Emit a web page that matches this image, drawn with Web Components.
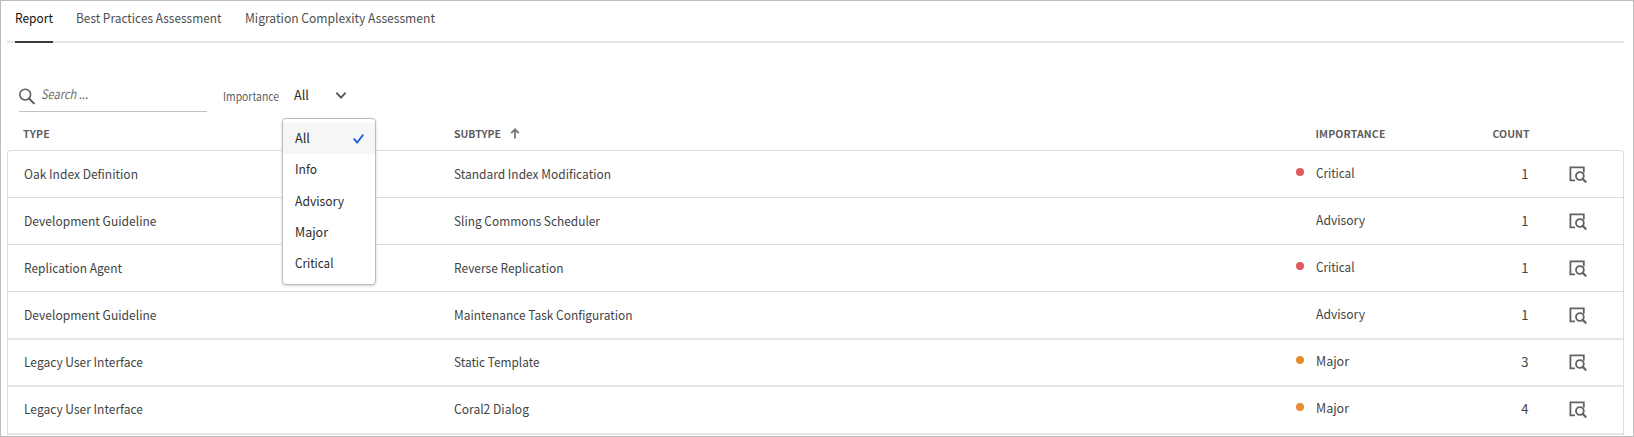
<!DOCTYPE html>
<html lang="en">
<head>
<meta charset="utf-8">
<title>Report</title>
<style>
  html, body { margin: 0; height: 100%; overflow: hidden; background: #fff; }
  body { font: 13px/18px "Noto Sans CJK SC", "Noto Sans", sans-serif; color: #444; }
</style>
</head>
<body>
<report-page></report-page>
<script>
const define = (name, html, init) => {
  const tpl = document.createElement('template');
  tpl.innerHTML = html;
  customElements.define(name, class extends HTMLElement {
    constructor() {
      super();
      this.attachShadow({ mode: 'open' }).append(tpl.content.cloneNode(true));
    }
    connectedCallback() { if (init) init(this, this.shadowRoot); }
  });
};

/* A single line of text that fills the given width: condensed when too long, tracked when too short. */
define('fit-text', `<style>
  :host { display: inline-block; white-space: nowrap; }
  span { display: inline-block; transform-origin: 0 50%; }
</style><span><slot></slot></span>`, (el, root) => {
  const want = parseFloat(el.getAttribute('width'));
  const span = root.querySelector('span');
  const n = el.textContent.length;
  if (!want || n < 2) return;
  const natural = span.getBoundingClientRect().width;
  el.style.width = want + 'px';
  if (natural > want) span.style.transform = `scaleX(${(want / natural).toFixed(4)})`;
  else span.style.letterSpacing = ((want - natural) / n).toFixed(3) + 'px';
});

define('tab-item', `<style>
  :host { display: block; box-sizing: border-box; height: 43px; padding-top: 9px; color: #505050; }
  :host([selected]) { color: #111; border-bottom: 2px solid #3c3c3c; }
</style><slot></slot>`);

define('tab-bar', `<style>
  :host { display: flex; gap: 23.2px; height: 43px; margin: 0 10px 0 7px; padding-left: 8px;
    box-sizing: border-box; background: linear-gradient(#e4e4e4, #e4e4e4) 0 41px / 100% 2px no-repeat; }
</style><slot></slot>`);

define('search-field', `<style>
  :host { display: flex; width: 188px; height: 29px; border-bottom: 1px solid #c2c2c2; box-sizing: border-box; color: #6e6e6e; font-style: italic; }
  svg { margin: 5px 6px 0 0; flex: none; }
  span { padding-top: 2px; }
</style>
<svg width="16" height="17" viewBox="0 0 16 17" fill="none" stroke="#5c5c5c"><circle cx="6.2" cy="6.6" r="5.4" stroke-width="1.6"/><path d="M10 10.5l4.9 4.9" stroke-width="2" stroke-linecap="round"/></svg>
<span><slot></slot></span>`);

define('menu-item', `<style>
  :host { display: flex; height: 31.3px; box-sizing: border-box; padding: 6px 11px 0 12px; color: #2c2c2c; justify-content: space-between; }
  :host([selected]) { background: #f6f6f6; }
  svg { display: none; margin-top: 5px; }
  :host([selected]) svg { display: block; }
</style><slot></slot>
<svg width="11" height="10" viewBox="0 0 11 10"><path d="M1.2 5.2l3 3.3L9.7 1.3" fill="none" stroke="#1566dc" stroke-width="1.9" stroke-linecap="round" stroke-linejoin="round"/></svg>`);

define('select-menu', `<style>
  :host { display: block; position: absolute; left: 281px; top: 117px; width: 94px; height: 167px; box-sizing: border-box;
    padding: 4px 0; background: #fff; border: 1px solid #bdbdbd; border-radius: 4px; box-shadow: 0 1px 3px rgba(0,0,0,.18); z-index: 2; }
</style><slot></slot>`);

define('select-field', `<style>
  :host { display: flex; color: #2c2c2c; }
  .label { font-size: 11.5px; color: #5f5f5f; margin: 4px 15px 0 0; }
  .value { margin: 3px 27px 0 0; }
  svg { margin-top: 9px; }
</style>
<span class="label"><slot name="label"></slot></span>
<span class="value"><slot></slot></span>
<svg width="10" height="8" viewBox="0 0 10 8"><path d="M1 1.3l4 4.4 4-4.4" fill="none" stroke="#555" stroke-width="1.9" stroke-linecap="round" stroke-linejoin="round"/></svg>`);

define('table-header', `<style>
  :host { display: grid; grid-template-columns: 430.5px 862px 130px 84px; height: 24px; margin: 14px 0 0 23px;
    font-size: 10.5px; line-height: 15px; font-weight: 700; color: #5e5e5e; }
  .sort { display: flex; gap: 9.5px; }
  .count { text-align: right; }
  svg { margin-top: 2px; }
</style>
<fit-text width="27">TYPE</fit-text>
<div class="sort"><fit-text width="47">SUBTYPE</fit-text><svg width="10" height="11" viewBox="0 0 10 11"><path d="M5 10.5V2M1.2 5.2L5 1.3l3.8 3.9" fill="none" stroke="#777" stroke-width="1.8"/></svg></div>
<fit-text width="70">IMPORTANCE</fit-text>
<div class="count"><fit-text width="37">COUNT</fit-text></div>`);

define('table-row', `<style>
  :host { display: grid; grid-template-columns: 430px 837px 24.5px 129px 84px 1fr; height: 47.1px; box-sizing: border-box; padding: 14px 0 0 16px;
    border-top: 1px solid #dcdcdc; }
  :host(:first-of-type) { margin-top: -1px; border-top-color: transparent; }
  :host(:nth-of-type(n+5)) { border-top: 2px solid #e6e6e6; padding-top: 13px; }
  .dot { width: 8px; height: 8px; border-radius: 50%; margin: 3px 0 0 5px; }
  .Critical { background: #e05a60; } .Major { background: #e68d31; }
  .level { margin-top: -1px; }
  .count { text-align: right; }
  svg { margin: 1px 0 0 40px; }
</style>
<div><slot name="type"></slot></div><div><slot name="subtype"></slot></div>
<i class="dot"></i><div class="level"><slot name="level"></slot></div><div class="count"><slot name="count"></slot></div>
<svg width="18" height="18" viewBox="0 0 18 18" fill="none" stroke="#626262" stroke-width="1.8"><path d="M6 14.4H1.4V1.4h13.4v5"/><circle cx="10.9" cy="10" r="3.9"/><path d="M13.7 12.9l2.9 2.9" stroke-width="2.2" stroke-linecap="round"/></svg>`,
(el, root) => root.querySelector('.dot').classList.add(el.getAttribute('level')));

define('data-table', `<style>
  :host { display: block; margin: 0 10px 0 7px; height: 285px; box-sizing: border-box; border: 1px solid #dcdcdc; border-bottom: 0; border-radius: 4px 4px 0 0; overflow: hidden; }
  .end { height: 2px; background: #e6e6e6; }
</style><slot></slot><div class="end"></div>`, (el) => {
  const text = (slot, value, width) => `<fit-text slot="${slot}" width="${width}">${value}</fit-text>`;
  const rows = [
    ['Oak Index Definition', 114, 'Standard Index Modification', 157, 'Critical', 1],
    ['Development Guideline', 132.5, 'Sling Commons Scheduler', 146, 'Advisory', 1],
    ['Replication Agent', 98, 'Reverse Replication', 109.5, 'Critical', 1],
    ['Development Guideline', 132.5, 'Maintenance Task Configuration', 178.5, 'Advisory', 1],
    ['Legacy User Interface', 119, 'Static Template', 85.5, 'Major', 3],
    ['Legacy User Interface', 119, 'Coral2 Dialog', 75, 'Major', 4],
  ];
  const levels = { Critical: 38.5, Advisory: 49, Major: 33 };
  el.innerHTML = rows.map(([type, tw, sub, sw, level, count]) =>
    `<table-row level="${level}">${text('type', type, tw)}${text('subtype', sub, sw)}${text('level', level, levels[level])}<span slot="count">${count}</span></table-row>`).join('');
});

define('report-page', `<style>
  :host { display: block; position: relative; width: 100%; height: 437px; box-sizing: border-box; border: 1px solid #bdbdbd; }
  .content { margin: -1px; }
  .tools { display: flex; gap: 16px; padding: 40px 0 0 19px; }
</style>
<div class="content">
  <tab-bar>
    <tab-item selected><fit-text width="38">Report</fit-text></tab-item>
    <tab-item><fit-text width="145.5">Best Practices Assessment</fit-text></tab-item>
    <tab-item><fit-text width="190">Migration Complexity Assessment</fit-text></tab-item>
  </tab-bar>
  <div class="tools">
    <search-field><fit-text width="47">Search ...</fit-text></search-field>
    <select-field><fit-text slot="label" width="56">Importance</fit-text><fit-text width="15">All</fit-text></select-field>
  </div>
  <select-menu>
    <menu-item selected><fit-text width="15">All</fit-text></menu-item>
    <menu-item><fit-text width="22">Info</fit-text></menu-item>
    <menu-item><fit-text width="49">Advisory</fit-text></menu-item>
    <menu-item><fit-text width="33">Major</fit-text></menu-item>
    <menu-item><fit-text width="38.5">Critical</fit-text></menu-item>
  </select-menu>
  <table-header></table-header>
  <data-table></data-table>
</div>`);
</script>
</body>
</html>
